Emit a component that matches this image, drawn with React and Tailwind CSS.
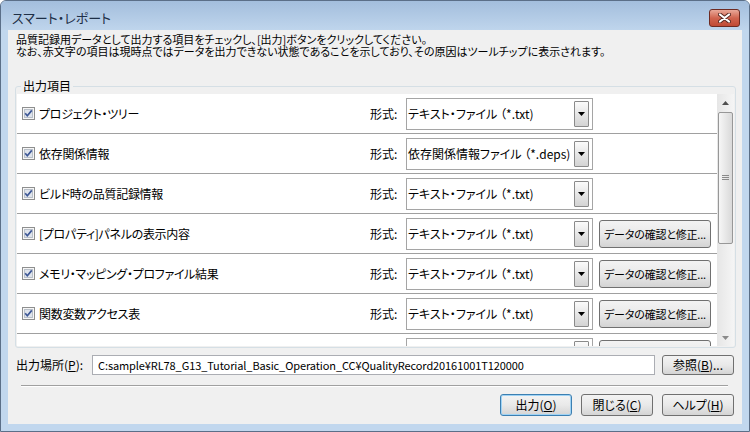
import React from "react";

const rows = [
  { label: "プロジェクト・ツリー", format: "テキスト・ファイル （*.txt)", edit: false },
  { label: "依存関係情報", format: "依存関係情報ファイル （*.deps)", edit: false },
  { label: "ビルド時の品質記録情報", format: "テキスト・ファイル （*.txt)", edit: false },
  { label: "[プロパティ]パネルの表示内容", format: "テキスト・ファイル （*.txt)", edit: true },
  { label: "メモリ・マッピング・プロファイル結果", format: "テキスト・ファイル （*.txt)", edit: true },
  { label: "関数変数アクセス表", format: "テキスト・ファイル （*.txt)", edit: true },
  // next row is scrolled below the visible area, only its top edge shows
  { label: "", format: "", edit: true, hidden: true },
];

function CheckBox() {
  return (
    <svg width="13" height="13" viewBox="0 0 13 13" className="shrink-0">
      <rect x="0.5" y="0.5" width="12" height="12" fill="#f6f6f6" stroke="#8e8f8f" />
      <rect x="2.5" y="2.5" width="8" height="8" fill="#dfe4ec" stroke="#b9c0c9" />
      <path d="M3.2 6.3 L5.3 8.8 L9.8 3.4" stroke="#3d5796" strokeWidth="1.7" fill="none" />
    </svg>
  );
}

function WinButton({ children, className = "" }) {
  return (
    <div
      className={
        "flex items-center justify-center whitespace-nowrap rounded-[3px] border bg-linear-to-b from-[#f3f3f3] via-[#e9e9e9] to-[#d4d4d4] leading-[14px] text-black " +
        className
      }
    >
      {children}
    </div>
  );
}

function Select({ text }) {
  return (
    <div className="flex h-[32px] w-[187px] shrink-0 items-center border border-[#a5a5a5] bg-white pl-[1px] pr-[3px]">
      <span className="flex-1 whitespace-nowrap text-[12px] leading-[14px]">{text}</span>
      <div className="flex h-[26px] w-[15px] items-center justify-center rounded-[1px] border border-[#8a8a8a] bg-linear-to-b from-[#fbfbfb] to-[#d3d3d3]">
        <svg width="7" height="4" viewBox="0 0 7 4">
          <path d="M0 0H7L3.5 4Z" fill="#000" />
        </svg>
      </div>
    </div>
  );
}

function ScrollBar() {
  return (
    <div className="flex w-[17px] shrink-0 flex-col bg-linear-to-r from-[#e6e6e6] to-[#f5f5f5]">
      <div className="flex h-[17px] items-center justify-center">
        <svg width="7" height="4" viewBox="0 0 7 4">
          <path d="M0 4H7L3.5 0Z" fill="#4f4f4f" />
        </svg>
      </div>
      <div className="flex-1 px-[1px] pt-[1px]">
        <div className="flex h-[132px] items-center justify-center rounded-[2px] border border-[#979797] bg-linear-to-r from-[#f6f6f6] to-[#d9d9d9]">
          <svg width="7" height="6" viewBox="0 0 7 6">
            <path d="M0 0.5H7M0 2.5H7M0 4.5H7" stroke="#8a8a8a" strokeWidth="1" />
          </svg>
        </div>
      </div>
      <div className="flex h-[17px] items-center justify-center">
        <svg width="7" height="4" viewBox="0 0 7 4">
          <path d="M0 0H7L3.5 4Z" fill="#8a8a8a" />
        </svg>
      </div>
    </div>
  );
}

export default function App() {
  return (
    <div className="h-[432px] w-[750px] overflow-hidden bg-white">
      <div className="flex h-[432px] w-[750px] flex-col overflow-hidden rounded-t-[6px] border border-[#5b6f88] bg-[#c1d7ee] font-['Noto_Sans_CJK_JP','Noto_Sans',sans-serif] text-black [font-feature-settings:'palt']">
        {/* title bar */}
        <div className="flex h-[29px] shrink-0 items-center justify-between bg-linear-to-b from-[#a3bedd] to-[#bfd5ec] pl-[11px] pr-[9px] pt-[4px]">
          <span className="text-[13px] leading-[16px] text-[#1e2f47]">スマート・レポート</span>
          <div className="flex h-[18px] w-[31px] items-center justify-center rounded-[3px] border border-[#6e2b22] bg-linear-to-b from-[#e9a899] via-[#d0644f] to-[#c04a35]">
            <svg width="13" height="10" viewBox="0 0 13 10">
              <path d="M2 1.5L11 8.5M11 1.5L2 8.5" stroke="#5a2a24" strokeWidth="4" strokeLinecap="round" />
              <path d="M2 1.5L11 8.5M11 1.5L2 8.5" stroke="#ffffff" strokeWidth="2.2" strokeLinecap="round" />
            </svg>
          </div>
        </div>

        <div className="flex flex-1 px-[7px] pb-[7px]">
          {/* client */}
          <div className="flex flex-1 flex-col bg-[#f0f0f0] pt-[3px]">
            <div className="whitespace-nowrap pl-[8px] text-[11px] leading-[12px]">
              <div>品質記録用データとして出力する項目をチェックし、[出力]ボタンをクリックしてください。</div>
              <div>なお、赤文字の項目は現時点ではデータを出力できない状態であることを示しており、その原因はツールチップに表示されます。</div>
            </div>

            <fieldset className="ml-[7px] mr-[6px] mt-[22px] rounded-[3px] border border-[#d5dfe5] px-[1px] pb-[1px]">
              <legend className="ml-[4px] px-[2px] text-[12px] leading-[14px]">出力項目</legend>
              <div className="mt-[1px] flex h-[252px] bg-white">
                <div className="flex-1 overflow-hidden">
                  {rows.map((r, i) => (
                    <div
                      key={i}
                      className="flex h-[40px] items-center border-b border-[#a0a0a0] pl-[5px] text-[12px] leading-[14px]"
                    >
                      <CheckBox />
                      <span className="ml-[4px] w-[331px] whitespace-nowrap tracking-[-0.3px]">{r.label}</span>
                      <span className="w-[36px]">{r.hidden ? "" : "形式:"}</span>
                      <Select text={r.format} />
                      {r.edit && (
                        <WinButton className="ml-[6px] h-[28px] w-[112px] border-[#707070] text-[11px] tracking-[-0.2px]">
                          {r.hidden ? "" : "データの確認と修正..."}
                        </WinButton>
                      )}
                    </div>
                  ))}
                </div>
                <ScrollBar />
              </div>
            </fieldset>

            {/* output location */}
            <div className="mt-[7px] flex items-center pl-[8px] pr-[8px] text-[12px] leading-[14px]">
              <span className="w-[76px] whitespace-nowrap">
                出力場所(<span className="underline">P</span>):
              </span>
              <div className="flex h-[20px] flex-1 items-center whitespace-nowrap border border-[#abadb3] bg-white pl-[5px] text-[11px] tracking-[-0.1px]">
                C:sample¥RL78_G13_Tutorial_Basic_Operation_CC¥QualityRecord20161001T120000
              </div>
              <WinButton className="ml-[7px] h-[20px] w-[72px] border-[#707070] text-[12px]">
                参照(<span className="underline">B</span>)...
              </WinButton>
            </div>

            <div className="ml-[13px] mr-[14px] mt-[10px] border-b border-t border-b-white border-t-[#a0a0a0]" />

            <div className="mt-[7px] flex justify-end gap-[9px] pr-[8px]">
              <WinButton className="h-[22px] w-[72px] border-[#3c7fb1] text-[12px] shadow-[inset_0_0_0_1px_#9fd3f5]">
                出力(<span className="underline">O</span>)
              </WinButton>
              <WinButton className="h-[22px] w-[72px] border-[#707070] text-[12px]">
                閉じる(<span className="underline">C</span>)
              </WinButton>
              <WinButton className="h-[22px] w-[72px] border-[#707070] text-[12px]">
                ヘルプ(<span className="underline">H</span>)
              </WinButton>
            </div>
          </div>
        </div>
      </div>
    </div>
  );
}
